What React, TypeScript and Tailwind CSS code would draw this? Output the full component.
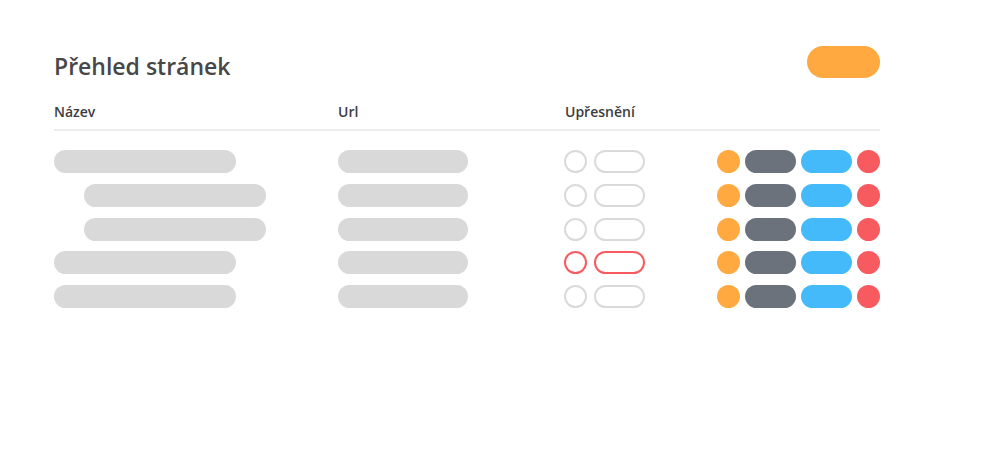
import React from "react";

const rows = [
  { indent: false, error: false },
  { indent: true, error: false },
  { indent: true, error: false },
  { indent: false, error: true },
  { indent: false, error: false },
];

export default function App() {
  return (
    <div
      className="w-[1005px] h-[475px] bg-white"
      style={{ fontFamily: '"Open Sans", "Noto Sans", sans-serif' }}
    >
      <div className="w-[826px] ml-[54px] pt-[46px]">
        <div className="flex items-center justify-between h-[32px]">
          <h1 className="text-[23px] font-semibold text-[#474747] leading-none pt-[8px]">Přehled stránek</h1>
          <div className="w-[73px] h-[32px] rounded-full bg-[#FFA940]" />
        </div>
        <div className="flex items-center h-[20px] mt-[23px] text-[14px] font-semibold text-[#3d3d3d]">
          <div className="w-[284px]">Název</div>
          <div className="w-[227px]">Url</div>
          <div>Upřesnění</div>
        </div>
        <div className="h-[2px] bg-[#ececec] mt-[8px]" />
        <div className="flex flex-col gap-[10.75px] mt-[19px]">
          {rows.map((r, i) => (
            <div key={i} className="flex items-center h-[23px]">
              <div className="w-[284px] flex">
                <div
                  className={
                    "h-[23px] w-[182px] rounded-full bg-[#D9D9D9] " +
                    (r.indent ? "ml-[30px]" : "")
                  }
                />
              </div>
              <div className="w-[226px]">
                <div className="h-[23px] w-[130px] rounded-full bg-[#D9D9D9]" />
              </div>
              <div className="flex items-center gap-[7px] w-[153px]">
                <div
                  className={
                    "w-[23px] h-[23px] rounded-full border-2 " +
                    (r.error ? "border-[#F75A5F]" : "border-[#DADADA]")
                  }
                />
                <div
                  className={
                    "w-[51px] h-[23px] rounded-full border-2 " +
                    (r.error ? "border-[#F75A5F]" : "border-[#DADADA]")
                  }
                />
              </div>
              <div className="flex items-center gap-[5px]">
                <div className="w-[23px] h-[23px] rounded-full bg-[#FFA940]" />
                <div className="w-[51px] h-[23px] rounded-full bg-[#6B727B]" />
                <div className="w-[51px] h-[23px] rounded-full bg-[#45BAFB]" />
                <div className="w-[23px] h-[23px] rounded-full bg-[#F75A5F]" />
              </div>
            </div>
          ))}
        </div>
      </div>
    </div>
  );
}
